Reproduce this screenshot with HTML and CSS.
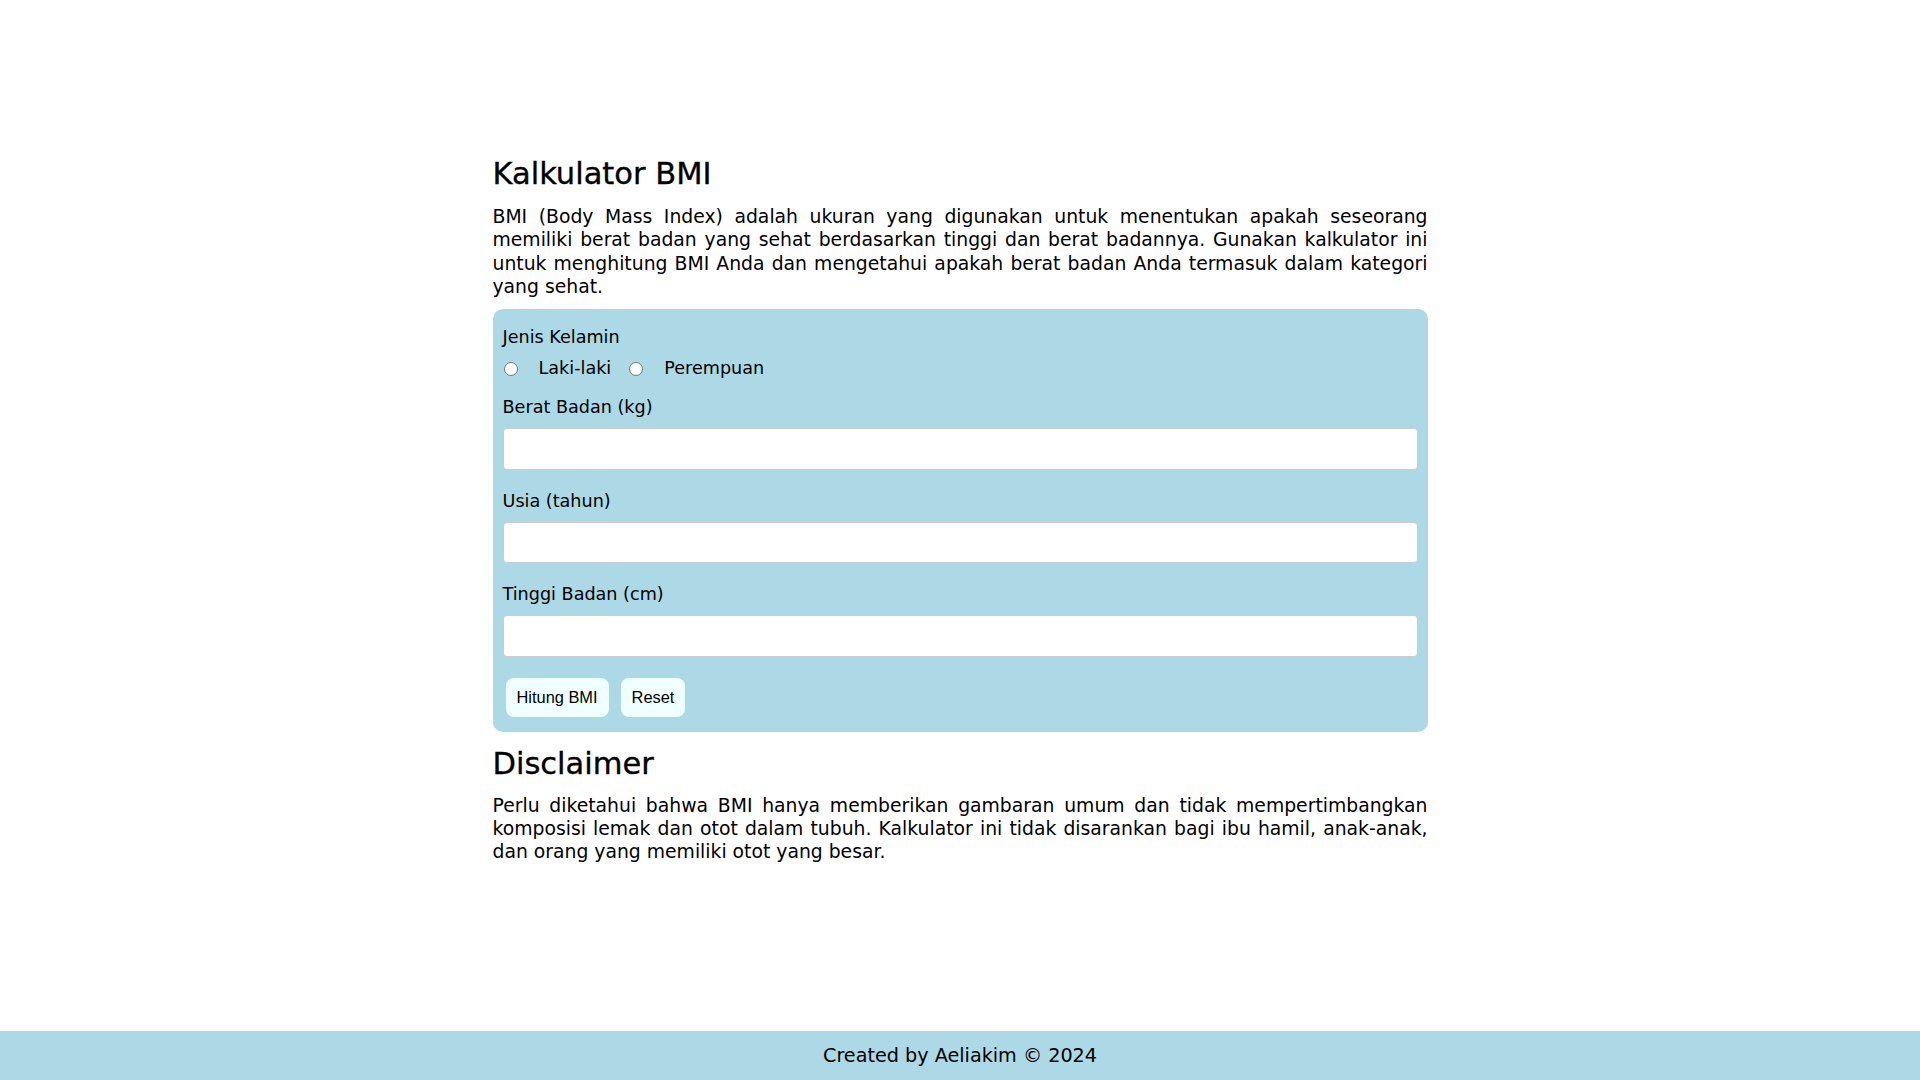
FILE: index.html
```html
<!DOCTYPE html>
<html lang="id">
<head>
<meta charset="utf-8">
<title>Kalkulator BMI</title>
<link rel="stylesheet" href="styles.css">
</head>
<body>
<main class="page">
  <h1 class="title">Kalkulator BMI</h1>
  <p class="text">BMI (Body Mass Index) adalah ukuran yang digunakan untuk menentukan apakah seseorang memiliki berat badan yang sehat berdasarkan tinggi dan berat badannya. Gunakan kalkulator ini untuk menghitung BMI Anda dan mengetahui apakah berat badan Anda termasuk dalam kategori yang sehat.</p>
  <form class="calc">
    <div class="field-label">Jenis Kelamin</div>
    <div class="radio-row">
      <input class="radio" type="radio" name="gender" id="male">
      <label class="radio-label" for="male">Laki-laki</label>
      <input class="radio" type="radio" name="gender" id="female">
      <label class="radio-label" for="female">Perempuan</label>
    </div>
    <label class="field-label" for="weight">Berat Badan (kg)</label>
    <input class="field-input" type="text" id="weight">
    <label class="field-label" for="age">Usia (tahun)</label>
    <input class="field-input" type="text" id="age">
    <label class="field-label" for="height">Tinggi Badan (cm)</label>
    <input class="field-input" type="text" id="height">
    <div class="actions">
      <button class="btn" type="button">Hitung BMI</button>
      <button class="btn" type="reset">Reset</button>
    </div>
  </form>
  <h2 class="title title-sub">Disclaimer</h2>
  <p class="text">Perlu diketahui bahwa BMI hanya memberikan gambaran umum dan tidak mempertimbangkan komposisi lemak dan otot dalam tubuh. Kalkulator ini tidak disarankan bagi ibu hamil, anak-anak, dan orang yang memiliki otot yang besar.</p>
</main>
<footer class="footer">Created by Aeliakim © 2024</footer>
</body>
</html>
```

FILE: styles.css
```css
html, body {
  margin: 0;
  padding: 0;
}

body {
  min-height: 100vh;
  display: flex;
  flex-direction: column;
  font-family: "DejaVu Sans", Verdana, sans-serif;
  color: #000;
  background: #fff;
}

.page {
  flex: 1;
  width: 935px;
  margin: 0 auto;
  padding-top: 156px;
  box-sizing: border-box;
}

.title {
  margin: 0 0 14px;
  font-size: 30.5px;
  line-height: 35px;
  font-weight: normal;
  -webkit-text-stroke: 0.35px currentColor;
}

.title-sub {
  margin: 13.5px 0 13px;
}

.text {
  margin: 0 0 11px;
  font-size: 18.8px;
  line-height: 23.3px;
  text-align: justify;
}

.calc {
  background: #add8e6;
  border-radius: 10px;
  padding: 18px 10px 15.5px;
}

.field-label {
  display: block;
  font-size: 17.6px;
  line-height: 21px;
  margin-bottom: 10px;
}

.radio-row {
  display: flex;
  align-items: center;
  margin-bottom: 18px;
  font-size: 17.6px;
  line-height: 21px;
}

.radio {
  -webkit-appearance: none;
  appearance: none;
  box-sizing: border-box;
  width: 14px;
  height: 14px;
  margin: 0 21px 0 1px;
  border: 1px solid #767676;
  border-radius: 50%;
  background: #fff;
}

.radio:checked {
  border: 4px solid #0075ff;
}

.radio-label {
  margin-right: 17px;
}

.field-input {
  display: block;
  width: 100%;
  height: 41.5px;
  box-sizing: border-box;
  margin: 0 0 21px;
  padding: 0 10px;
  border: 1px solid #ccc;
  border-radius: 4px;
  background: #fff;
  font-family: inherit;
  font-size: 16px;
}

.actions {
  display: flex;
  gap: 12px;
  padding: 0 0 0 3px;
}

.btn {
  font-family: "Liberation Sans", Arial, sans-serif;
  font-size: 16.4px;
  line-height: 19px;
  padding: 10px 11px;
  border: none;
  border-radius: 8px;
  background: #f0ffff;
  color: #000;
}

.footer {
  height: 49px;
  line-height: 49px;
  background: #add8e6;
  text-align: center;
  font-size: 19.2px;
}
```
